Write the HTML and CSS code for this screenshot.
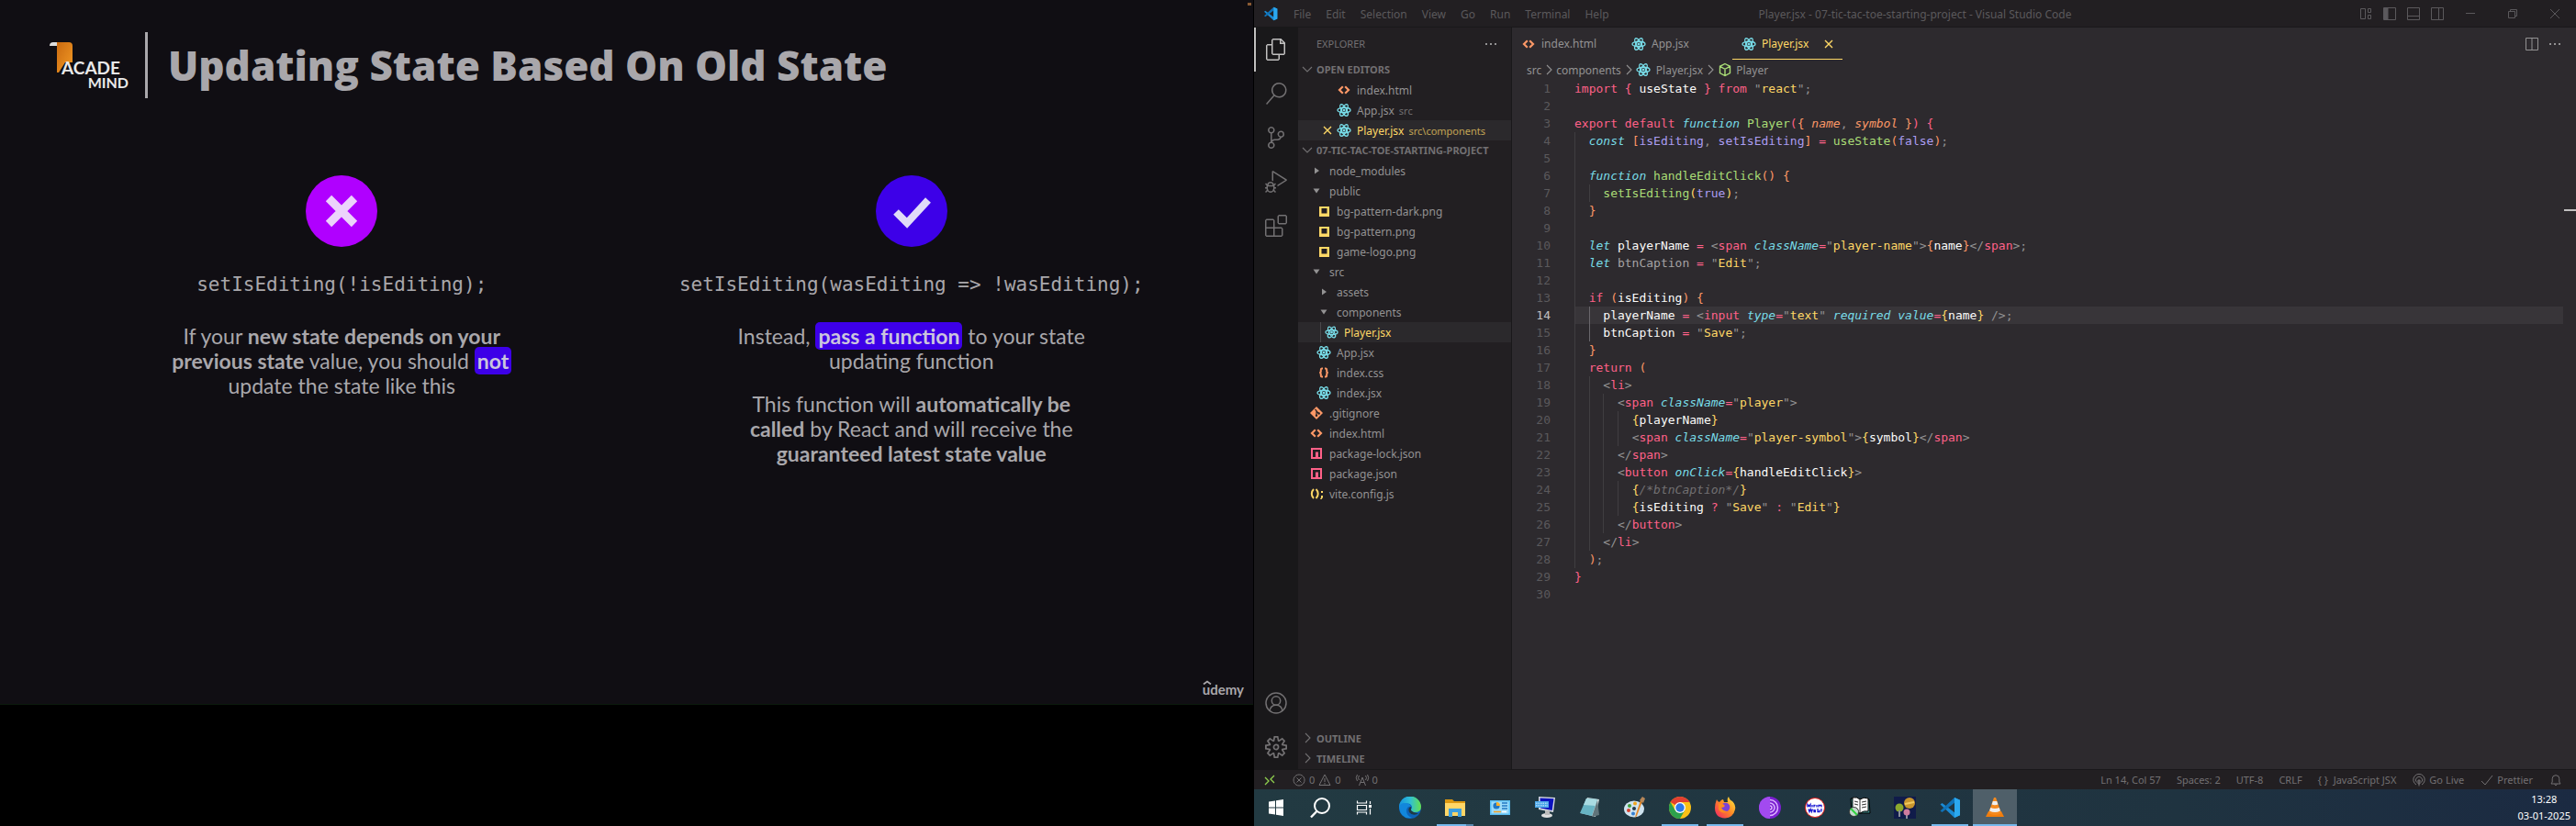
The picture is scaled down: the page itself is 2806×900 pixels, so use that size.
FILE: index.html
```html
<!DOCTYPE html>
<html lang="en">
<head>
<meta charset="utf-8">
<title>Player.jsx - 07-tic-tac-toe-starting-project - Visual Studio Code</title>
<link rel="stylesheet" href="styles.css">
</head>
<body>
<svg class="defs" aria-hidden="true">
  <symbol id="react" viewBox="0 0 16 16"><g fill="none" stroke="#78dce8" stroke-width="1.4"><ellipse cx="8" cy="8" rx="7" ry="2.7"/><ellipse cx="8" cy="8" rx="7" ry="2.7" transform="rotate(60 8 8)"/><ellipse cx="8" cy="8" rx="7" ry="2.7" transform="rotate(120 8 8)"/></g><circle cx="8" cy="8" r="1.5" fill="#78dce8"/></symbol>
  <symbol id="html" viewBox="0 0 16 16"><path d="M6.8 4.2 3 8l3.800 3.800M9.200 4.200 13 8l-3.800 3.800" fill="none" stroke="#fc9867" stroke-width="2.200"/></symbol>
  <symbol id="css" viewBox="0 0 16 16"><path d="M7 3.500H5.800Q4.800 3.500 4.800 5v1.500Q4.800 8 3.200 8q1.600 0 1.600 1.500V11q0 1.500 1 1.500H7M9 3.500h1.200q1 0 1 1.500v1.500q0 1.500 1.600 1.500-1.600 0-1.600 1.500V11q0 1.500-1 1.500H9" fill="none" stroke="#fc9867" stroke-width="2"/></symbol>
  <symbol id="js" viewBox="0 0 16 16"><path d="M5 3Q2.800 5 2.800 8T5 13M7.500 3q2.200 2 2.200 5t-2.200 5" fill="none" stroke="#ffd866" stroke-width="2"/><path d="M13 5h2v2h-2zM13 10h2v2l-1.500 2H12l1-2z" fill="#ffd866"/></symbol>
  <symbol id="image" viewBox="0 0 16 16"><path d="M3 3h11v11H3zM5.500 5v5.500h6V5z" fill="#ffd866" fill-rule="evenodd"/></symbol>
  <symbol id="npm" viewBox="0 0 16 16"><path d="M2 2h12v12H2zM4 4v8h3V6.500h3V12h2V4z" fill="#ff6188" fill-rule="evenodd"/></symbol>
  <symbol id="git" viewBox="0 0 16 16"><path d="m8 1 7 7-7 7-7-7z" fill="#fc9867"/><path d="M6.500 4 8 5.500v5M8 6l2.500 2.500" stroke="#221f22" stroke-width="1.200" fill="none"/><circle cx="8" cy="10.800" r="1.200" fill="#221f22"/><circle cx="10.700" cy="8.500" r="1.200" fill="#221f22"/></symbol>
  <symbol id="open" viewBox="0 0 16 16"><path d="M4.500 5.500h7L8 10.500z" fill="#939293"/></symbol>
  <symbol id="shut" viewBox="0 0 16 16"><path d="M6 4.500v7l5-3.500z" fill="#939293"/></symbol>
  <symbol id="down" viewBox="0 0 16 16"><path d="m3 6 5 5 5-5" fill="none" stroke="currentColor" stroke-width="1.100"/></symbol>
  <symbol id="right" viewBox="0 0 16 16"><path d="m6 3 5 5-5 5" fill="none" stroke="currentColor" stroke-width="1.100"/></symbol>
  <symbol id="close" viewBox="0 0 16 16"><path d="m4 4 8 8m0-8-8 8" fill="none" stroke="currentColor" stroke-width="1.400"/></symbol>
  <symbol id="dots" viewBox="0 0 16 16"><path d="M2 7h2v2H2zm5 0h2v2H7zm5 0h2v2h-2z" fill="currentColor"/></symbol>
  <symbol id="vscode" viewBox="0 0 24 24"><path d="m17 1 6 2.800v16.400L17 23 1.500 8.500 3.500 7 17 17.200z" fill="#1a8ad4"/><path d="M17 1 1.500 15.500l2 1.500L17 6.800z" fill="#0f72b8"/><path d="m17 1 6 2.800v16.400L17 23z" fill="#2ba8ef"/></symbol>
</svg>

<main class="desk">
  <section class="left">
    <article class="slide">
      <header class="slide-head">
        <div class="logo">
          <svg viewBox="0 0 26 34" aria-hidden="true"><defs><linearGradient id="lg" x2="1" y2="1"><stop stop-color="#c96a10"/><stop offset="1" stop-color="#f39a25"/></linearGradient></defs><path d="M8 0h13q4 0 4 4v18h-8L10 33H8z" fill="url(#lg)"/><path d="M0 4q0-4 4-4h4v4z" fill="#ddd"/></svg>
          <span class="acade">ACADE</span><span class="mind">MIND</span>
        </div>
        <h1>Updating State Based On Old State</h1>
      </header>
      <div class="compare">
        <section>
          <svg class="badge" viewBox="0 0 78 78" aria-hidden="true"><circle cx="39" cy="39" r="39" fill="#b000ff"/><path d="m25 25 28 28m0-28-28 28" stroke="#ecd3fb" stroke-width="9"/></svg>
          <code class="sample">setIsEditing(!isEditing);</code>
          <p>If your <b>new state depends on your<br>previous state</b> value, you should <mark>not</mark><br>update the state like this</p>
        </section>
        <section>
          <svg class="badge" viewBox="0 0 78 78" aria-hidden="true"><circle cx="39" cy="39" r="39" fill="#3d00e8"/><path d="m22 40 12 12 23-25" fill="none" stroke="#e0dcf8" stroke-width="8"/></svg>
          <code class="sample">setIsEditing(wasEditing =&gt; !wasEditing);</code>
          <p>Instead, <mark>pass a function</mark> to your state<br>updating function</p>
          <p>This function will <b>automatically be<br>called</b> by React and will receive the<br><b>guaranteed latest state value</b></p>
        </section>
      </div>
      <footer class="brand">
        <svg viewBox="0 0 10 5" aria-hidden="true"><path d="m1 4.500 4-3 4 3" fill="none" stroke="#a9a7ab" stroke-width="1.800"/></svg>udemy</footer>
      <i class="speck"></i>
    </article>
  </section>

  <section class="right">
    <div class="titlebar">
      <nav class="menu">
        <svg class="app" viewBox="0 0 24 24"><use href="#vscode"/></svg>
        <button>File</button><button>Edit</button><button>Selection</button><button>View</button><button>Go</button><button>Run</button><button>Terminal</button><button>Help</button>
      </nav>
      <span class="title">Player.jsx - 07-tic-tac-toe-starting-project - Visual Studio Code</span>
      <div class="winctl">
        <button class="lay" aria-label="Customize layout"><svg viewBox="0 0 16 16"><path d="M2.500 2.500h5v11h-5zM10.500 2.500h3v4h-3zM10.500 9.500h3v4h-3z"/></svg></button>
        <button class="lay" aria-label="Toggle side bar"><svg viewBox="0 0 16 16"><path d="M1.500 1.500h13v13h-13z"/><path d="M2 2h4v12H2z" fill="currentColor"/></svg></button>
        <button class="lay" aria-label="Toggle panel"><svg viewBox="0 0 16 16"><path d="M1.500 1.500h13v13h-13zM1.500 10.500h13"/></svg></button>
        <button class="lay" aria-label="Toggle secondary side bar"><svg viewBox="0 0 16 16"><path d="M1.500 1.500h13v13h-13zM9.500 1.500v13"/></svg></button>
        <button class="win" aria-label="Minimize"><svg viewBox="0 0 16 16"><path d="M3 7.500h10"/></svg></button>
        <button class="win" aria-label="Restore"><svg viewBox="0 0 16 16"><path d="M3.500 5.500h7v7h-7zM5.500 5V3.500h7v7H11"/></svg></button>
        <button class="win" aria-label="Close"><svg viewBox="0 0 16 16"><path d="m3 3 10 10m0-10L3 13"/></svg></button>
      </div>
    </div>

    <div class="work">
      <nav class="activity">
        <button class="on" aria-label="Explorer"><svg viewBox="0 0 24 24"><path d="M17.500 0h-9L7 1.500V6H2.500L1 7.500v15.070L2.500 24h12.070L16 22.570V18h4.700l1.300-1.430V4.500L17.500 0zm0 2.120l2.380 2.380H17.500V2.120zm-3 20.380h-12v-15H7v9.070L8.500 18h6v4.500zm6-6h-12v-15H16V6h4.500v10.500z"/></svg></button>
        <button aria-label="Search"><svg viewBox="0 0 24 24"><path d="M15.250 0a8.250 8.250 0 0 0-6.180 13.720L1 22.880l1.120 1 8.050-9.120A8.251 8.251 0 1 0 15.250.01V0zm0 15a6.750 6.750 0 1 1 0-13.500 6.750 6.750 0 0 1 0 13.500z"/></svg></button>
        <button aria-label="Source control"><svg viewBox="0 0 24 24"><path d="M21.007 8.222A3.738 3.738 0 0 0 15.045 5.200a3.737 3.737 0 0 0 1.156 6.583 2.988 2.988 0 0 1-2.668 1.670h-2.990a4.456 4.456 0 0 0-2.989 1.165V7.400a3.737 3.737 0 1 0-1.494 0v9.117a3.776 3.776 0 1 0 1.816.099 2.990 2.990 0 0 1 2.668-1.667h2.990a4.484 4.484 0 0 0 4.223-3.039 3.736 3.736 0 0 0 3.250-3.687zM4.565 3.738a2.242 2.242 0 1 1 4.484 0 2.242 2.242 0 0 1-4.484 0zm4.484 16.441a2.242 2.242 0 1 1-4.484 0 2.242 2.242 0 0 1 4.484 0zm8.221-9.715a2.242 2.242 0 1 1 0-4.485 2.242 2.242 0 0 1 0 4.485z"/></svg></button>
        <button aria-label="Run and debug"><svg viewBox="0 0 24 24"><path d="M10.940 13.500l-1.320 1.320a3.730 3.730 0 0 0-7.240 0L1.060 13.500 0 14.560l1.720 1.720-.22.22V18H0v1.500h1.500v.08c.077.489.214.966.41 1.420L0 22.940 1.060 24l1.650-1.650A4.308 4.308 0 0 0 6 24a4.310 4.310 0 0 0 3.290-1.650L10.940 24 12 22.940 10.090 21c.198-.464.336-.951.41-1.450v-.1H12V18h-1.500v-1.500l-.22-.22L12 14.560l-1.060-1.060zM6 13.500a2.250 2.250 0 0 1 2.250 2.250h-4.500A2.250 2.250 0 0 1 6 13.500zm3 6a3.330 3.330 0 0 1-3 3 3.330 3.330 0 0 1-3-3v-2.250h6v2.250zm14.760-9.900v1.260L13.500 17.370V15.600l8.500-5.370L9 2v9.460a5.070 5.070 0 0 0-1.500-.72V.63L8.640 0l15.120 9.600z"/></svg></button>
        <button aria-label="Extensions"><svg viewBox="0 0 24 24"><path d="M13.500 1.500L15 0h7.500L24 1.500V9l-1.500 1.500H15L13.500 9V1.500zm1.500 0V9h7.500V1.500H15zM0 15V6l1.500-1.500H9L10.500 6v7.500H18l1.500 1.500v7.500L18 24H1.500L0 22.500V15zm9-1.500V6H1.500v7.500H9zM9 15H1.500v7.500H9V15zm1.500 7.500H18V15h-7.500v7.500z"/></svg></button>
        <button class="push" aria-label="Accounts"><svg viewBox="0 0 24 24"><g fill="none" stroke="currentColor" stroke-width="1.500"><circle cx="12" cy="12" r="11"/><circle cx="12" cy="9.500" r="4.700"/><path d="M5 20.500q1-6.300 7-6.300t7 6.300"/></g></svg></button>
        <button aria-label="Manage"><svg viewBox="0 0 24 24"><path d="M19.850 8.750l4.150.83v4.840l-4.150.83 2.350 3.520-3.430 3.430-3.520-2.350-.83 4.150H9.580l-.83-4.150-3.520 2.350-3.430-3.430 2.350-3.520L0 14.420V9.580l4.150-.83L1.800 5.230 5.230 1.800l3.520 2.350L9.580 0h4.840l.83 4.150 3.520-2.350 3.430 3.430-2.350 3.520zm-1.570 5.070l4-.81v-2l-4-.81-.54-1.300 2.290-3.430-1.430-1.430-3.430 2.290-1.300-.54-.81-4h-2l-.81 4-1.300.54-3.430-2.290-1.430 1.430L6.380 8.900l-.54 1.300-4 .81v2l4 .81.54 1.300-2.290 3.430 1.430 1.430 3.430-2.290 1.300.54.81 4h2l.81-4 1.300-.54 3.430 2.290 1.430-1.430-2.290-3.430.54-1.300zm-8.186-4.672A3.430 3.430 0 0 1 12 8.570 3.440 3.440 0 0 1 15.430 12a3.430 3.430 0 1 1-5.336-2.852zm.956 4.274c.281.188.612.288.95.288A1.700 1.700 0 0 0 13.710 12a1.710 1.710 0 1 0-2.660 1.422z"/></svg></button>
      </nav>

      <aside class="sidebar">
        <header class="side-head"><h2>EXPLORER</h2><button aria-label="More"><svg class="ic"><use href="#dots"/></svg></button></header>
        <h3><svg class="ic"><use href="#down"/></svg>OPEN EDITORS</h3>
        <ul class="tree editors">
          <li><svg class="ic"></svg><svg class="ic"><use href="#html"/></svg>index.html</li>
          <li><svg class="ic"></svg><svg class="ic"><use href="#react"/></svg>App.jsx<small>src</small></li>
          <li class="sel"><svg class="ic"><use href="#close"/></svg><svg class="ic"><use href="#react"/></svg>Player.jsx<small>src\components</small></li>
        </ul>
        <h3><svg class="ic"><use href="#down"/></svg>07-TIC-TAC-TOE-STARTING-PROJECT</h3>
        <ul class="tree">
          <li><svg class="ic"><use href="#shut"/></svg>node_modules</li>
          <li><svg class="ic"><use href="#open"/></svg>public</li>
          <li class="d1"><svg class="ic"><use href="#image"/></svg>bg-pattern-dark.png</li>
          <li class="d1"><svg class="ic"><use href="#image"/></svg>bg-pattern.png</li>
          <li class="d1"><svg class="ic"><use href="#image"/></svg>game-logo.png</li>
          <li><svg class="ic"><use href="#open"/></svg>src</li>
          <li class="d1"><svg class="ic"><use href="#shut"/></svg>assets</li>
          <li class="d1"><svg class="ic"><use href="#open"/></svg>components</li>
          <li class="d2 sel"><svg class="ic"><use href="#react"/></svg>Player.jsx</li>
          <li class="d1"><svg class="ic"><use href="#react"/></svg>App.jsx</li>
          <li class="d1"><svg class="ic"><use href="#css"/></svg>index.css</li>
          <li class="d1"><svg class="ic"><use href="#react"/></svg>index.jsx</li>
          <li><svg class="ic"><use href="#git"/></svg>.gitignore</li>
          <li><svg class="ic"><use href="#html"/></svg>index.html</li>
          <li><svg class="ic"><use href="#npm"/></svg>package-lock.json</li>
          <li><svg class="ic"><use href="#npm"/></svg>package.json</li>
          <li><svg class="ic"><use href="#js"/></svg>vite.config.js</li>
        </ul>
        <h3 class="push"><svg class="ic"><use href="#right"/></svg>OUTLINE</h3>
        <h3><svg class="ic"><use href="#right"/></svg>TIMELINE</h3>
      </aside>

      <div class="editor">
        <div class="tabs">
          <button class="tab"><svg class="ic"><use href="#html"/></svg>index.html</button>
          <button class="tab"><svg class="ic"><use href="#react"/></svg>App.jsx</button>
          <button class="tab active"><svg class="ic"><use href="#react"/></svg>Player.jsx<svg class="ic x"><use href="#close"/></svg></button>
          <div class="acts">
            <button aria-label="Split editor"><svg class="ic" viewBox="0 0 16 16"><path d="M1.500 1.500h13v13h-13zM8 1.500v13" fill="none" stroke="currentColor"/></svg></button>
            <button aria-label="More actions"><svg class="ic"><use href="#dots"/></svg></button>
          </div>
        </div>
        <div class="crumbs">src<svg class="sep"><use href="#right"/></svg>components<svg class="sep"><use href="#right"/></svg><svg class="ic"><use href="#react"/></svg>Player.jsx<svg class="sep"><use href="#right"/></svg><svg class="ic cube" viewBox="0 0 16 16"><path d="m8 1.500 5.500 2.800v7.200L8 14.500l-5.500-3V4.300zM2.500 4.300 8 7.300l5.500-3M8 7.300v7" fill="none" stroke="#a9dc76" stroke-width="1.400"/></svg>Player</div>
        <ol class="code">
<li><span class="k">import</span> <span class="k">{</span> <span class="w">useState</span> <span class="k">}</span> <span class="k">from</span> "<span class="y">react</span>";</li>
<li></li>
<li><span class="k">export</span> <span class="k">default</span> <em class="b">function</em> <span class="g">Player</span><span class="k">(</span><span class="o">{</span> <em class="o">name</em>, <em class="o">symbol</em> <span class="o">}</span><span class="k">)</span> <span class="k">{</span></li>
<li><s>  </s><em class="b">const</em> <span class="o">[</span><span class="p">isEditing</span>, <span class="p">setIsEditing</span><span class="o">]</span> <span class="k">=</span> <span class="g">useState</span><span class="o">(</span><span class="p">false</span><span class="o">)</span>;</li>
<li><s>  </s></li>
<li><s>  </s><em class="b">function</em> <span class="g">handleEditClick</span><span class="o">()</span> <span class="o">{</span></li>
<li><s>  </s><s>  </s><span class="g">setIsEditing</span><span class="y">(</span><span class="p">true</span><span class="y">)</span>;</li>
<li><s>  </s><span class="o">}</span></li>
<li><s>  </s></li>
<li><s>  </s><em class="b">let</em> <span class="w">playerName</span> <span class="k">=</span> &lt;<span class="k">span</span> <em class="b">className</em><span class="k">=</span>"<span class="y">player-name</span>"&gt;<span class="o">{</span><span class="w">name</span><span class="o">}</span>&lt;/<span class="k">span</span>&gt;;</li>
<li><s>  </s><em class="b">let</em> <span class="u">btnCaption</span> <span class="k">=</span> "<span class="y">Edit</span>";</li>
<li><s>  </s></li>
<li><s>  </s><span class="k">if</span> <span class="o">(</span><span class="w">isEditing</span><span class="o">)</span> <span class="o">{</span></li>
<li class="cur"><s>  </s><s class="lit">  </s><span class="w">playerName</span> <span class="k">=</span> &lt;<span class="k">input</span> <em class="b">type</em><span class="k">=</span>"<span class="y">text</span>" <em class="b">required</em> <em class="b">value</em><span class="k">=</span><span class="y">{</span><span class="w">name</span><span class="y">}</span> /&gt;;</li>
<li><s>  </s><s class="lit">  </s><span class="w">btnCaption</span> <span class="k">=</span> "<span class="y">Save</span>";</li>
<li><s>  </s><span class="o">}</span></li>
<li><s>  </s><span class="k">return</span> <span class="o">(</span></li>
<li><s>  </s><s>  </s>&lt;<span class="k">li</span>&gt;</li>
<li><s>  </s><s>  </s><s>  </s>&lt;<span class="k">span</span> <em class="b">className</em><span class="k">=</span>"<span class="y">player</span>"&gt;</li>
<li><s>  </s><s>  </s><s>  </s><s>  </s><span class="y">{</span><span class="w">playerName</span><span class="y">}</span></li>
<li><s>  </s><s>  </s><s>  </s><s>  </s>&lt;<span class="k">span</span> <em class="b">className</em><span class="k">=</span>"<span class="y">player-symbol</span>"&gt;<span class="y">{</span><span class="w">symbol</span><span class="y">}</span>&lt;/<span class="k">span</span>&gt;</li>
<li><s>  </s><s>  </s><s>  </s>&lt;/<span class="k">span</span>&gt;</li>
<li><s>  </s><s>  </s><s>  </s>&lt;<span class="k">button</span> <em class="b">onClick</em><span class="k">=</span><span class="y">{</span><span class="w">handleEditClick</span><span class="y">}</span>&gt;</li>
<li><s>  </s><s>  </s><s>  </s><s>  </s><span class="y">{</span><em class="c">/*btnCaption*/</em><span class="y">}</span></li>
<li><s>  </s><s>  </s><s>  </s><s>  </s><span class="y">{</span><span class="w">isEditing</span> <span class="k">?</span> "<span class="y">Save</span>" <span class="k">:</span> "<span class="y">Edit</span>"<span class="y">}</span></li>
<li><s>  </s><s>  </s><s>  </s>&lt;/<span class="k">button</span>&gt;</li>
<li><s>  </s><s>  </s>&lt;/<span class="k">li</span>&gt;</li>
<li><s>  </s><span class="o">)</span>;</li>
<li><span class="k">}</span></li>
<li></li>
        </ol>
        <i class="ruler"></i>
      </div>
    </div>

    <footer class="status">
      <svg class="ic remote" viewBox="0 0 16 16"><path d="m3 5 4 4-4 4M13 3 9 7l4 4" fill="none" stroke="#8fcf4e" stroke-width="1.300"/></svg>
      <span class="it probs"><svg class="ic" viewBox="0 0 16 16"><path d="M8 2a6 6 0 1 0 .1 0zM5.500 5.500l5 5m0-5-5 5"/></svg>0<svg class="ic" viewBox="0 0 16 16"><path d="M8 2 2 13.500h12zM8 6v4M8 11v1.500"/></svg>0</span>
      <span class="it"><svg class="ic" viewBox="0 0 16 16"><path d="m4.500 14 3.500-9 3.500 9M6 10.500h4M4.500 3q-2 2.500 0 5M11.500 3q2 2.500 0 5M2.500 2q-2.500 3.500 0 7M13.500 2q2.500 3.500 0 7"/></svg>0</span>
      <div class="st-right">
        <span>Ln 14, Col 57</span><span>Spaces: 2</span><span>UTF-8</span><span>CRLF</span><span>{ }&nbsp; JavaScript JSX</span>
        <span class="it"><svg class="ic" viewBox="0 0 16 16"><path d="M5 13A6.200 6.200 0 1 1 11 13M5.500 10.500a3.600 3.600 0 1 1 5 0M8 8v6.500M7 8h2v4H7z"/></svg>Go Live</span>
        <span class="it"><svg class="ic" viewBox="0 0 16 16"><path d="m2 9 4 4 8-10"/></svg>Prettier</span>
        <svg class="ic" viewBox="0 0 16 16"><path d="M3 12h10l-1.200-2V6.500a3.800 3.800 0 0 0-7.600 0V10zM6.500 12.500q1.500 2.500 3 0"/></svg>
      </div>
    </footer>

    <nav class="taskbar">
      <button aria-label="Start"><svg viewBox="0 0 24 24"><path d="m4 5.500 7-1v7H4zM12 4.300 20 3v8.500h-8zM4 12.500h7v7l-7-1zM12 12.500h8V21l-8-1.200z" fill="#fff"/></svg></button>
      <button aria-label="Search"><svg viewBox="0 0 24 24"><circle cx="14" cy="10" r="8" fill="none" stroke="#fff" stroke-width="2"/><path d="m8.300 16-6.300 6.500" stroke="#fff" stroke-width="2.400"/></svg></button>
      <button aria-label="Task view"><svg viewBox="0 0 24 24"><path d="M4.500 4.500V7h10V4.500M4.500 19.500V17h10v2.500M4.500 9.500h10v5h-10zM18.500 5v3M18.500 13v6.500" fill="none" stroke="#fff" stroke-width="1.200"/><path d="M17 9h3v3h-3z" fill="#fff"/></svg></button>
      <button class="gap" aria-label="Edge"><svg viewBox="0 0 24 24"><defs><linearGradient id="e1" x2="1"><stop stop-color="#1492df"/><stop offset=".5" stop-color="#30bfd5"/><stop offset="1" stop-color="#65e14d"/></linearGradient></defs><circle cx="12" cy="12" r="12" fill="#0c62b8"/><path d="M0 12A12 12 0 0 1 24 11q0 6-7 6-4 0-4-3 2-2 0-5Q8 5 0 12z" fill="url(#e1)"/><path d="M0 12q1-5 6-5 6 0 7 4-4-1-5 4 0 6 6 8Q2 25 0 12z" fill="#1287dc"/><path d="M13 11q-4 1-2 6 4 5 11 1-5 1-9-3z" fill="#203a43"/></svg></button>
      <button class="run multi" aria-label="File Explorer"><svg viewBox="0 0 24 24"><path d="M1 3h8l2 2h12v16H1z" fill="#dc9811"/><path d="M1 7h22v14H1z" fill="#ffd667"/><path d="M5 13h14v9h-4v-5H9v5H5z" fill="#3d9fe0"/></svg></button>
      <button aria-label="Control Panel"><svg viewBox="0 0 24 24"><path d="M1 4h22v16H1z" fill="#59bdf2"/><path d="M2.500 5.500h19v13h-19z" fill="#9cdcfb"/><circle cx="8" cy="10" r="3.600" fill="#2378c4"/><path d="M8 10V6a4 4 0 0 1 4 4z" fill="#ffb12b"/><path d="M14 7h6M14 10h6M14 13h6" stroke="#2378c4" stroke-width="1.500"/><path d="M5 16.500h8" stroke="#f2a227" stroke-width="1.500"/><path d="M14 16.500h5" stroke="#fff" stroke-width="1.500"/></svg></button>
      <button aria-label="On-screen keyboard"><svg viewBox="0 0 24 24"><path d="m5 0 18 1-2 16L5 14z" fill="#d4d8df"/><path d="m6.500 1.500 15 .8-1.800 12.700L7 12.500z" fill="#0c12bd"/><path d="M1 5h15v7H1z" fill="#4da8e9"/><path d="M2 7.200h13M2 9.800h13" stroke="#d5edff" stroke-dasharray="1.500 1"/><ellipse cx="14" cy="20.500" rx="6" ry="2.500" fill="#dedede"/><path d="M12 15h5v5h-5z" fill="#bbb"/></svg></button>
      <button aria-label="Notepad"><svg viewBox="0 0 24 24"><path d="m9 1 13 2-4 19-16-4z" fill="#c9d7d9"/><path d="m8 2 12 1-6 18-13-3z" fill="#68b4c4"/><path d="m8 2 12 1-2 7-13-1z" fill="#a9dbe2"/><path d="m20 4 2 16-8 2z" fill="#60747a"/></svg></button>
      <button aria-label="Paint"><svg viewBox="0 0 24 24"><ellipse cx="11" cy="13.500" rx="11" ry="9" fill="#cfe3ef"/><circle cx="6" cy="10" r="2" fill="#3f9d3a"/><circle cx="12" cy="7.500" r="2" fill="#f0a51f"/><circle cx="5" cy="15" r="2" fill="#d6412f"/><circle cx="10" cy="18.500" r="2" fill="#357fd0"/><circle cx="11" cy="13" r="2" fill="#21384a"/><path d="m20 5-6 16-2 2 1-4 5-15z" fill="#e58a2b"/><path d="m17 4 3-4 3 2-2 5z" fill="#b58759"/></svg></button>
      <button class="run" aria-label="Chrome"><svg viewBox="0 0 24 24"><circle cx="12" cy="12" r="12" fill="#fbc116"/><path d="M12 12 1.600 6A12 12 0 0 1 22.400 6H12z" fill="#e23f31"/><path d="M1.600 6A12 12 0 0 0 12 24l5.200-9L12 12 6.800 15z" fill="#2da14c"/><circle cx="12" cy="12" r="6" fill="#fff"/><circle cx="12" cy="12" r="4.700" fill="#2e79ea"/></svg></button>
      <button class="run" aria-label="Firefox"><svg viewBox="0 0 24 24"><defs><linearGradient id="f1" x1="1" x2="0" y2="1"><stop stop-color="#fff13d"/><stop offset=".5" stop-color="#ff8526"/><stop offset="1" stop-color="#f01c6b"/></linearGradient></defs><path d="M3 3q1 3 3 3 2-3 4-3l1 3h4q-1-4 1-6 1 4 4 5 4 4 3 9-2 9-11 9.500Q1 23 1 12 1 8 3 3z" fill="url(#f1)"/><circle cx="12.500" cy="11.500" r="4.800" fill="#7b41d8"/><path d="M5 8q5-1 7 2-1 2-4 2 2 4 7 4-6 4-10-2z" fill="#ff8b20"/></svg></button>
      <button aria-label="Tor Browser"><svg viewBox="0 0 24 24"><circle cx="12" cy="12" r="12" fill="#7a1fd0"/><path d="M12 0a12 12 0 0 0 0 24z" fill="#a24af0"/><path d="M12 3.500a8.500 8.500 0 0 1 0 17M12 7a5 5 0 0 1 0 10M12 10a2 2 0 0 1 0 4" fill="none" stroke="#ddb5ff" stroke-width="1.500"/></svg></button>
      <button aria-label="Merriam-Webster"><svg viewBox="0 0 24 24"><circle cx="12" cy="12" r="10.500" fill="#fff" stroke="#e11919"/><path d="M4 11.500V8.500l1.500 2L7 8.500v3M9 9v2.500M11 11.500v-2l1.500 0M14 9v2.500M16 11.500v-2h3v2M5 13.500l1 3 1.200-3 1.200 3 1-3M11 15h2M11 14v2.500h2M15 13v3.500h2V14.500M19 13v3.500" fill="none" stroke="#1716d2" stroke-width="1.300"/></svg></button>
      <button aria-label="Dictionary"><svg viewBox="0 0 24 24"><path d="m2 2 20 1 1 15H3z" fill="#3f8f8e" stroke="#000"/><path d="M4 1q5-1 8 2 4-3 9-1v14q-5-1-9 2-4-3-8-2z" fill="#fff" stroke="#000"/><path d="M12 3v15M6 5l4 1M6 8l4 1M14 6l5-1M14 9l5-1M14 12l5-1" stroke="#333"/><circle cx="5.500" cy="16.500" r="5" fill="#c5d9ce" stroke="#333"/><path d="M5.500 16.500 2 13M5.500 16.500 9 20" stroke="#31d33f" stroke-width="2"/></svg></button>
      <button aria-label="Game"><svg viewBox="0 0 24 24"><path d="M0 0h24v24H0z" fill="#101b4a"/><circle cx="17" cy="7" r="6" fill="#c9952d"/><path d="m12 8 10-2" stroke="#f1c95e" stroke-width="2"/><circle cx="6" cy="12" r="4.500" fill="#8ba82e"/><path d="M5 15h2v7H5zM13 20h2v4h-2z" fill="#8b8f9b"/><circle cx="14" cy="17" r="3.500" fill="#cf7b9e"/></svg></button>
      <button class="run" aria-label="Visual Studio Code"><svg viewBox="0 0 24 24"><use href="#vscode"/></svg></button>
      <button class="run front" aria-label="VLC"><svg viewBox="0 0 24 24"><path d="m5 16-3 6h20l-3-6z" fill="#f27d0c"/><path d="M11 1h2l6 17q-7 4-14 0z" fill="#f58a1f"/><path d="m9.800 5-1.200 3.500q3.400 1.500 6.800 0L14.200 5zM7.300 12l-1.200 3.500q6 3 11.800 0L16.700 12q-4.700 2-9.400 0z" fill="#eee"/></svg></button>
      <time class="clock"><span>13:28</span><span>03-01-2025</span></time>
    </nav>
  </section>
</main>
</body>
</html>
```
FILE: styles.css
```css
* { box-sizing: border-box; }
body {
  margin: 0;
  background: #000;
  font-family: "Noto Sans", "Open Sans", sans-serif;
  font-size: 12px;
  color: #939293;
}
button {
  display: flex;
  align-items: center;
  padding: 0;
  border: 0;
  background: none;
  color: inherit;
  font: inherit;
}
h1, h2, h3, p, ul, ol { margin: 0; padding: 0; list-style: none; }
svg { display: block; flex: none; }
.defs { position: absolute; width: 0; height: 0; }
.ic { width: 16px; height: 16px; }
.push { margin-top: auto; }

.desk {
  display: grid;
  grid-template-columns: minmax(0, 1366fr) minmax(0, 1440fr);
  min-height: 100vh;
}

/* lecture slide */
.slide {
  position: relative;
  display: flex;
  flex-direction: column;
  aspect-ratio: 16 / 9;
  margin-right: 1px;
  padding: 35px 0 0;
  background: #100e13;
  border-bottom: 1px solid #0b1a0c;
  color: #a9a7ab;
  font-family: Lato, sans-serif;
}
.slide-head { display: flex; align-items: center; height: 72px; padding-left: 54px; }
.logo {
  display: grid;
  width: 107px;
  height: 72px;
  padding: 11px 18px 0 0;
  align-content: start;
  border-right: 3px solid #a9a7ab;
  color: #e9e9e9;
  font-weight: 700;
  font-size: 16px;
  line-height: 16px;
}
.logo svg { grid-area: 1 / 1; width: 26px; height: 34px; }
.acade { grid-area: 1 / 1; align-self: end; justify-self: end; margin-right: 9px; padding-top: 20px; font-size: 19px; }
.mind { justify-self: end; }
.slide h1 { padding-left: 22px; font-family: "Open Sans", sans-serif; font-size: 44px; font-weight: 800; line-height: 72px; white-space: nowrap; }
.compare {
  display: grid;
  grid-template-columns: 1fr 1fr;
  padding: 84px 62px 0;
  text-align: center;
}
.compare section { display: flex; flex-direction: column; align-items: center; }
.badge { width: 78px; height: 78px; }
.sample { margin: 27px 0 29px; font: 21px/28px "DejaVu Sans Mono", monospace; }
.compare p { margin-bottom: 20px; font-size: 23px; line-height: 27px; }
.compare mark {
  padding: 1px 3px;
  border-radius: 5px;
  background: #3d00e8;
  color: #cbc5dd;
  font-weight: 700;
}
.brand {
  display: flex;
  flex-direction: column;
  align-self: flex-end;
  margin-top: auto;
  padding: 0 10px 8px 0;
  font-size: 15px;
  font-weight: 700;
  line-height: 16px;
}
.brand svg { width: 10px; height: 5px; margin-bottom: -3px; }
.speck { position: absolute; top: 3px; right: 2px; width: 4px; height: 3px; background: #8a5a33; }

/* editor window */
.right { display: flex; flex-direction: column; min-height: 100vh; background: #221f22; }
.titlebar {
  display: grid;
  grid-template-columns: 1fr auto 1fr;
  height: 30px;
  border-bottom: 1px solid #19181a;
  color: #5b595c;
}
.menu { display: flex; align-items: center; }
.menu button { height: 30px; padding: 0 8px; }
.app { width: 16px; height: 16px; margin: 0 9px 0 10px; }
.title { align-self: center; }
.winctl { display: flex; justify-content: flex-end; }
.winctl button { justify-content: center; }
.winctl svg { width: 16px; height: 16px; fill: none; stroke: currentColor; }
.winctl .lay { width: 26px; }
.winctl .win { width: 46px; }

.work {
  display: grid;
  flex: 1;
  grid-template-columns: 48px 233px minmax(0, 1fr);
  border-bottom: 1px solid #19181a;
}
.activity { display: flex; flex-direction: column; background: #19181a; color: #727072; }
.activity button { justify-content: center; height: 48px; }
.activity svg { width: 24px; height: 24px; fill: currentColor; }
.activity .on { box-shadow: inset 2px 0 #c1c0c0; color: #c1c0c0; }

.sidebar { display: flex; flex-direction: column; border-right: 1px solid #19181a; }
.side-head {
  display: flex;
  align-items: center;
  justify-content: space-between;
  height: 35px;
  padding: 0 14px 0 20px;
}
h2, h3 { color: #727072; font-size: 11px; font-weight: 400; }
h3 { display: flex; align-items: center; gap: 2px; height: 22px; padding: 0 0 2px 2px; font-weight: 700; white-space: nowrap; }
.tree li { display: flex; align-items: center; gap: 6px; height: 22px; padding-left: 12px; white-space: nowrap; }
.editors li { padding-left: 24px; gap: 4px; }
.editors .ic + .ic { margin: 0 2px 0 -2px; }
.tree .d1 { padding-left: 20px; }
.tree .d2 { padding-left: 24px; }
.tree .d2 .ic { width: 20px; padding-left: 4px; height: 22px; border-left: 1px solid #4a484b; }
.tree .sel { background: #2b292c; color: #ffd866; }
.tree small { margin-left: 1px; font-size: 11px; opacity: .7; }

.editor { position: relative; background: #2d2a2e; }
.tabs { display: flex; height: 35px; }
.tab { gap: 6px; min-width: 120px; padding-left: 10px; }
.tab.active { color: #ffd866; box-shadow: inset 0 -1px #ffd866; }
.tab .x { margin-left: 8px; }
.acts { display: flex; gap: 9px; margin-left: auto; padding-right: 15px; }
.crumbs { display: flex; align-items: center; height: 22px; padding-left: 16px; }
.crumbs .sep { width: 16px; height: 16px; }
.crumbs .ic { margin-right: 6px; }
.crumbs .cube { margin-right: 4px; }

.code {
  counter-reset: n;
  font: 13px/19px "DejaVu Sans Mono", "Liberation Mono", monospace;
  color: #939293;
}
.code li {
  counter-increment: n;
  display: block;
  height: 19px;
  margin-left: 68px;
  white-space: pre;
}
.code li::before {
  content: counter(n);
  display: inline-block;
  width: 42px;
  margin: 0 26px 0 -68px;
  color: #5b595c;
  text-align: right;
}
.code .cur { margin-right: 14px; background: #383539; }
.code .cur::before { color: #c1c0c0; }
.code s { display: inline-block; height: 19px; vertical-align: top; text-decoration: none; box-shadow: inset 1px 0 #403e41; }
.code s.lit { box-shadow: inset 1px 0 #69676c; }
.k { color: #ff6188; }
.b { color: #78dce8; }
.g { color: #a9dc76; }
.o { color: #fc9867; }
.p { color: #ab9df2; }
.y { color: #ffd866; }
.w { color: #fcfcfa; }
.u { color: #a5a3a4; }
.c { color: #727072; }
.ruler { position: absolute; top: 198px; right: 0; width: 13px; height: 2px; background: #c1c0c0; }

.status {
  display: flex;
  align-items: center;
  height: 21px;
  padding: 0 14px 0 9px;
  color: #727072;
  font-size: 11px;
}
.status svg { fill: none; stroke: currentColor; }
.it { display: flex; align-items: center; gap: 3px; }
.remote { margin-right: 16px; }
.probs { margin-right: 15px; }
.st-right { display: flex; align-items: center; gap: 17px; margin-left: auto; }

.taskbar {
  display: flex;
  height: 40px;
  gap: 1px;
  background: linear-gradient(90deg, #223a42, #1f3340 70%, #1b2a42);
}
.taskbar button { justify-content: center; width: 48px; }
.taskbar button:nth-child(-n+3) { margin-right: -1px; }
.taskbar .gap { margin-left: 2px; }
.taskbar svg { width: 24px; height: 24px; }
.run { background: linear-gradient(#76b9ed, #76b9ed) bottom / 40px 2px no-repeat; }
.multi { background-image: linear-gradient(90deg, #76b9ed 80%, #5787ad 80%); }
.taskbar .front { background: linear-gradient(#76b9ed, #76b9ed) bottom / 100% 2px no-repeat, #4f5f69; }
.clock {
  display: flex;
  flex-direction: column;
  justify-content: center;
  margin-left: auto;
  padding-right: 6px;
  color: #fff;
  font-size: 11px;
  line-height: 18px;
  text-align: center;
}
```
